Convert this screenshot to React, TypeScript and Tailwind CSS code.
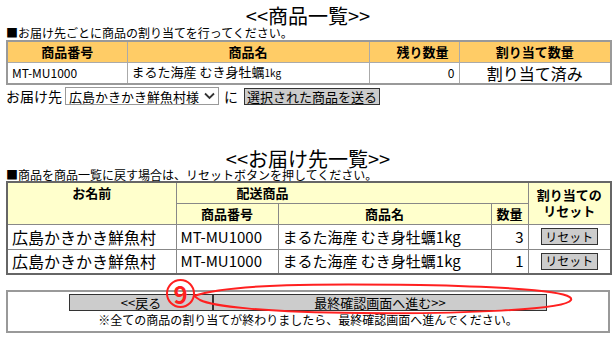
import React from "react";

const products = [
  { code: "MT-MU1000", name: "まるた海産 むき身牡蠣", unit: "1kg", left: 0 },
];

const deliveries = [
  { to: "広島かきかき鮮魚村", code: "MT-MU1000", name: "まるた海産 むき身牡蠣1kg", qty: 3 },
  { to: "広島かきかき鮮魚村", code: "MT-MU1000", name: "まるた海産 むき身牡蠣1kg", qty: 1 },
];

function GrayButton({ text, className }: { text: string; className?: string }) {
  return (
    <button
      type="button"
      className={`flex items-center justify-center whitespace-nowrap bg-[#cccccc] border border-[#333] leading-none ${className ?? ""}`}
    >
      {text}
    </button>
  );
}

export default function App() {
  return (
    <div className="relative w-[616px] h-[340px] overflow-hidden bg-white text-black px-[6px] font-['Noto_Sans_CJK_JP',sans-serif]">
      <h1 className="pt-[6px] h-[27px] text-center text-[20px] leading-[20px]">&lt;&lt;商品一覧&gt;&gt;</h1>
      <p className="h-[13px] text-[12px] leading-[12px]">■お届け先ごとに商品の割り当てを行ってください。</p>

      {/* 商品一覧 */}
      <table className="w-[604px] table-fixed border-collapse border-2 border-[#999]">
        <colgroup>
          <col className="w-[120px]" />
          <col className="w-[242px]" />
          <col className="w-[90px]" />
          <col className="w-[152px]" />
        </colgroup>
        <thead>
          <tr className="h-[21px] bg-[#ffcc66] text-[13px] leading-[16px] font-bold">
            <th className="border border-[#aaa] p-0">商品番号</th>
            <th className="border border-[#aaa] p-0">商品名</th>
            <th className="border border-[#aaa] p-0 text-right pr-[10px]">残り数量</th>
            <th className="border border-[#aaa] p-0">割り当て数量</th>
          </tr>
        </thead>
        <tbody>
          {products.map((p) => (
            <tr key={p.code} className="h-[22px] leading-[16px]">
              <td className="border border-[#aaa] pl-[4px] text-[12px]">{p.code}</td>
              <td className="border border-[#aaa] pl-[4px] text-[13px]">
                {p.name}
                <span className="text-[10px]">{p.unit}</span>
              </td>
              <td className="border border-[#aaa] pr-[4px] text-right text-[12px]">{p.left}</td>
              <td className="border border-[#aaa] text-center text-[16px]">割り当て済み</td>
            </tr>
          ))}
        </tbody>
      </table>

      <div className="mt-[2px] flex items-center h-[18px] text-[14px] leading-none whitespace-nowrap">
        <span>お届け先</span>
        <div className="ml-[3px] flex items-center justify-between w-[154px] h-[18px] border border-[#999] pl-[3px] pr-[3px]">
          <span className="text-[13px]">広島かきかき鮮魚村様</span>
          <svg width="11" height="8" viewBox="0 0 11 8">
            <path d="M1 1.5 L5.5 6 L10 1.5" fill="none" stroke="#333" strokeWidth="1.8" />
          </svg>
        </div>
        <span className="ml-[5px]">に</span>
        <GrayButton text="選択された商品を送る" className="ml-[6px] w-[136px] h-[17px] text-[13px]" />
      </div>

      <h2 className="mt-[44px] h-[20px] text-center text-[20px] leading-[19px]">&lt;&lt;お届け先一覧&gt;&gt;</h2>
      <p className="h-[12px] text-[12px] leading-[12px]">■商品を商品一覧に戻す場合は、リセットボタンを押してください。</p>

      {/* お届け先一覧 */}
      <table className="w-[604px] table-fixed border-collapse border-2 border-[#666]">
        <colgroup>
          <col className="w-[169px]" />
          <col className="w-[102px]" />
          <col className="w-[213px]" />
          <col className="w-[37px]" />
          <col className="w-[83px]" />
        </colgroup>
        <thead className="bg-[#ffffcc] text-[13px] leading-[16px] font-bold">
          <tr className="h-[21px]">
            <th rowSpan={2} className="border border-[#888] p-0 align-top pt-[2px]">お名前</th>
            <th colSpan={3} className="border border-[#888] p-0 text-left pl-[60px]">配送商品</th>
            <th rowSpan={2} className="border border-[#888] p-0 align-top pt-[3px]">
              <span className="block leading-[17px]">割り当ての</span>
              <span className="block leading-[15px]">リセット</span>
            </th>
          </tr>
          <tr className="h-[21px]">
            <th className="border border-[#888] p-0">商品番号</th>
            <th className="border border-[#888] p-0">商品名</th>
            <th className="border border-[#888] p-0">数量</th>
          </tr>
        </thead>
        <tbody className="text-[16px] leading-[18px]">
          {deliveries.map((d, i) => (
            <tr key={i} className="h-[25px]">
              <td className="border border-[#888] pl-[4px]">{d.to}</td>
              <td className="border border-[#888] pl-[4px] text-[15px]">{d.code}</td>
              <td className="border border-[#888] pl-[4px] text-[15px]">{d.name}</td>
              <td className="border border-[#888] pr-[4px] text-right text-[15px]">{d.qty}</td>
              <td className="border border-[#888]">
                <div className="flex justify-center">
                  <GrayButton text="リセット" className="w-[57px] h-[17px] text-[12px]" />
                </div>
              </td>
            </tr>
          ))}
        </tbody>
      </table>

      <div className="mt-[15px] w-[604px] h-[43px] border-2 border-[#999] flex flex-col items-center pt-[2px]">
        <div className="flex h-[17px] text-[13px]">
          <GrayButton text="<<戻る" className="w-[144px] h-[17px]" />
          <GrayButton text="最終確認画面へ進む>>" className="w-[334px] h-[17px]" />
        </div>
        <p className="mt-[2px] text-[12px] leading-[13px] whitespace-nowrap">※全ての商品の割り当てが終わりましたら、最終確認画面へ進んでください。</p>
      </div>

      {/* 注釈 */}
      <div className="absolute left-[166px] top-[279px] w-[29px] h-[29px] rounded-full border-2 border-[#ff2020] flex items-center justify-center text-[#ff2020] text-[24px] font-bold leading-none">
        9
      </div>
      <svg className="absolute left-0 top-0 pointer-events-none" width="616" height="340" viewBox="0 0 616 340">
        <path
          d="M194 296 C 230 283, 330 284, 420 285 C 520 287, 575 292, 571 300 C 566 310, 460 314, 360 313 C 260 312, 212 306, 200 300 L 194 296"
          fill="none"
          stroke="#ff2020"
          strokeWidth="2"
        />
      </svg>
    </div>
  );
}
